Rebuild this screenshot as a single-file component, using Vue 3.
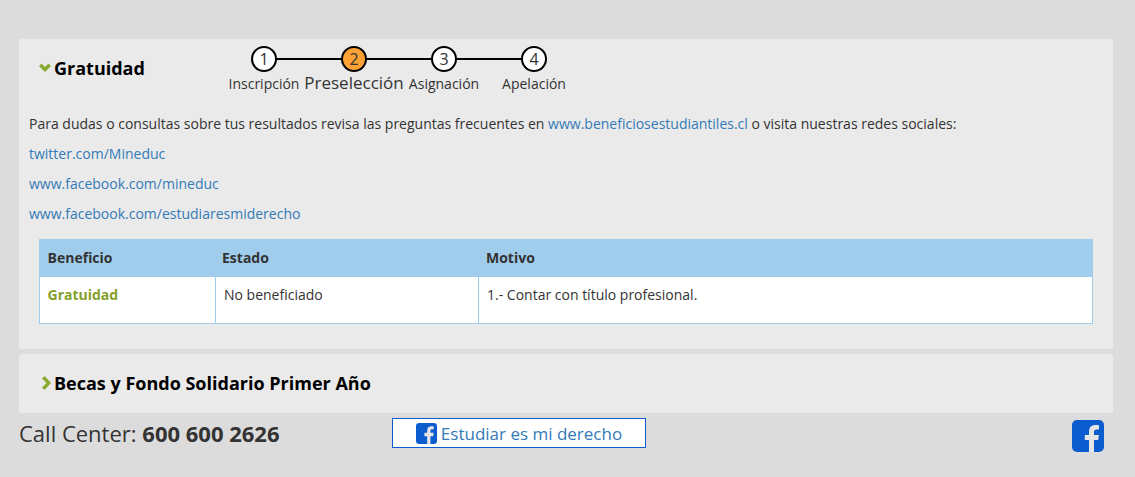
<template>
  <div class="page">
    <section class="panel first">
      <div class="head">
        <h3 class="title">
          <svg class="chev down" width="12" height="9" viewBox="0 0 12 9"><path d="M0 3 2.500.5 6 4 9.500.5 12 3 6 9Z" fill="#88a82e"/></svg>
          Gratuidad
        </h3>
        <ol class="steps">
          <li v-for="(s, i) in steps" :key="s" class="step" :class="{ active: i === 1 }">
            <span class="dot">{{ i + 1 }}</span>
            <span class="label">{{ s }}</span>
          </li>
        </ol>
      </div>
      <p class="line">Para dudas o consultas sobre tus resultados revisa las preguntas frecuentes en <a>www.beneficiosestudiantiles.cl</a> o visita nuestras redes sociales:</p>
      <p class="line"><a>twitter.com/Mineduc</a></p>
      <p class="line"><a>www.facebook.com/mineduc</a></p>
      <p class="line"><a>www.facebook.com/estudiaresmiderecho</a></p>
      <table class="grid">
        <thead>
          <tr><th class="c1">Beneficio</th><th class="c2">Estado</th><th class="c3">Motivo</th></tr>
        </thead>
        <tbody>
          <tr><td class="c1 green">Gratuidad</td><td class="c2">No beneficiado</td><td>1.- Contar con título profesional.</td></tr>
        </tbody>
      </table>
    </section>
    <section class="panel second">
      <h3 class="title">
        <svg class="chev right" width="9" height="14" viewBox="0 0 9 14"><path d="M0 2.500 2.500 0 9 7 2.500 14 0 11.500 4.500 7Z" fill="#88a82e"/></svg>
        Becas y Fondo Solidario Primer Año
      </h3>
    </section>
    <footer class="foot">
      <div class="call">Call Center: <b>600 600 2626</b></div>
      <a class="fbbtn">
        <svg width="21" height="21" viewBox="0 0 32 32"><rect width="32" height="32" rx="5" fill="#0b5ccf"/><path d="M22 32V20h4.200l.7-5H22v-3c0-1.500.7-2.500 2.600-2.500H27V5.200C26.300 5.100 24.900 5 23.400 5 19.700 5 17 7.200 17 11.400V15h-4.200v5H17v12Z" fill="#e6e6e6"/></svg>
        <span>Estudiar es mi derecho</span>
      </a>
      <svg class="fbbig" width="32" height="32" viewBox="0 0 32 32"><rect width="32" height="32" rx="5" fill="#0b5ccf"/><path d="M22 32V20h4.200l.7-5H22v-3c0-1.500.7-2.500 2.600-2.500H27V5.200C26.300 5.100 24.900 5 23.400 5 19.700 5 17 7.200 17 11.400V15h-4.200v5H17v12Z" fill="#e6e6e6"/></svg>
    </footer>
  </div>
</template>

<script setup>
const steps = ['Inscripción', 'Preselección', 'Asignación', 'Apelación']
</script>

<style>
html, body { margin: 0; background: #dcdcdc; }
</style>

<style scoped>
.page {
  box-sizing: border-box;
  height: 477px;
  padding: 39px 22px 0 19px;
  background: #dcdcdc;
  font-family: "Open Sans", sans-serif;
  font-size: 14px;
  color: #333;
  overflow: hidden;
}
.panel { background: #eaeaea; border-radius: 2px; }
.first { height: 310px; padding: 0 20px 0 10px; box-sizing: border-box; }
.second { height: 59px; margin-top: 5px; padding-left: 23px; display: flex; align-items: center; }
.head { height: 75px; display: flex; align-items: flex-start; }
.title {
  margin: 0;
  display: flex;
  align-items: center;
  font-size: 18px;
  line-height: 25px;
  font-weight: 700;
  color: #000;
}
.first .title { margin: 17px 0 0 10px; width: 180px; }
.chev { flex: none; }
.down { margin: -3px 3px 0 0; }
.right { margin: -1px 3px 0 0; }
.steps {
  list-style: none;
  margin: 7px 0 0;
  padding: 0;
  display: flex;
}
.step {
  position: relative;
  width: 90px;
  display: flex;
  flex-direction: column;
  align-items: center;
  white-space: nowrap;
}
.step:not(:last-child)::after {
  content: "";
  position: absolute;
  left: 45px;
  top: 12px;
  width: 90px;
  height: 2px;
  background: #000;
}
.dot {
  position: relative;
  z-index: 1;
  box-sizing: border-box;
  width: 26px;
  height: 26px;
  border: 2px solid #000;
  border-radius: 50%;
  background: #fff;
  font-size: 16px;
  line-height: 22px;
  text-align: center;
}
.active .dot { background: #fba135; }
.label { margin-top: 2px; line-height: 19px; height: 19px; }
.active .label { font-size: 17px; margin-top: 1px; }
.line { margin: 0 0 10px; line-height: 20px; height: 20px; white-space: nowrap; }
a { color: #337ab7; text-decoration: none; }
.grid {
  margin: 15px 0 0 10px;
  width: 1054px;
  border-collapse: collapse;
  table-layout: fixed;
}
.grid th, .grid td {
  text-align: left;
  padding: 8px;
  vertical-align: top;
  line-height: 20px;
}
.grid th {
  height: 37px;
  box-sizing: border-box;
  padding-top: 8px;
  background: #a1cdec;
  border: 1px solid #a1cdec;
  font-weight: 700;
}
.grid th.c1, .grid td.c1 { padding-left: 7.5px; }
.grid th.c3 { padding-left: 7px; }
.grid th.c2 { padding-left: 6px; }
.grid td {
  height: 47px;
  box-sizing: border-box;
  background: #fff;
  border: 1px solid #a1cdec;
}
.c1 { width: 176px; }
.c2 { width: 263px; }
.green { color: #84a12a; font-weight: 700; }
.foot { display: flex; align-items: flex-start; }
.call { width: 373px; font-size: 22px; line-height: 28px; margin-top: 6px; }
.fbbtn {
  box-sizing: border-box;
  margin-top: 5px;
  width: 254px;
  height: 30px;
  display: flex;
  align-items: center;
  justify-content: center;
  gap: 4px;
  background: #fff;
  border: 1px solid #0b5ccf;
  font-size: 17px;
}
.fbbig { margin: 7px 0 0 426px; }
</style>
